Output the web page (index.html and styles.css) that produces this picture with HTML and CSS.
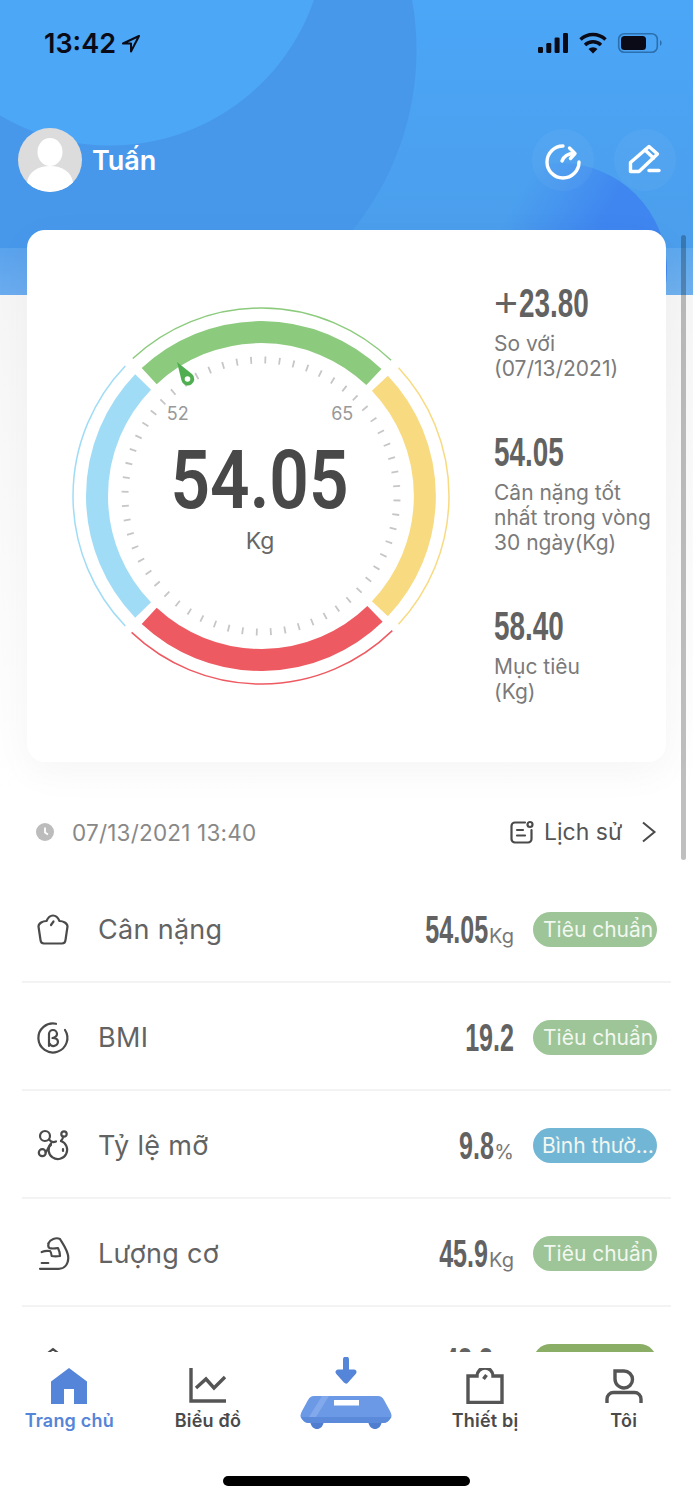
FILE: index.html
```html
<!DOCTYPE html>
<html lang="vi">
<head>
  <meta charset="UTF-8">
  <meta name="viewport" content="width=device-width, initial-scale=1.0">
  <title>Trang chủ</title>
  <link rel="stylesheet" href="styles.css">
</head>
<body>
  <div class="app">
    <div class="main">
      <div class="hero">
        <div class="status">
          <span class="time">13:42</span>
          <svg class="loc" width="20" height="20" viewBox="0 0 20 20"><path d="M18 2 L2 9.500 H10 V17.500 Z" fill="none" stroke="#0b0b18" stroke-width="2" stroke-linejoin="round"/></svg>
          <svg class="sys" width="125" height="24" viewBox="0 0 125 24">
            <g fill="#0b0b18">
              <rect x="0" y="15" width="5" height="6" rx="1.2"/>
              <rect x="8.3" y="11" width="5" height="10" rx="1.2"/>
              <rect x="16.6" y="5.5" width="5" height="15.5" rx="1.2"/>
              <rect x="25" y="1" width="5" height="20" rx="1.2"/>
            </g>
            <g fill="none" stroke="#0b0b18" stroke-width="3.4">
              <path d="M42.5 7.5 A18 18 0 0 1 67.5 7.5"/>
              <path d="M47 13 A11.5 11.5 0 0 1 63 13"/>
            </g>
            <path d="M55 21.5 L50.5 17 A6.5 6.5 0 0 1 59.5 17 Z" fill="#0b0b18"/>
            <rect x="80.7" y="1.7" width="38.6" height="18.6" rx="5.5" fill="none" stroke="#2a6fae" stroke-width="1.6"/>
            <rect x="83" y="4" width="25" height="14" rx="3.5" fill="#0b0b18"/>
            <path d="M122 8 a3.5 3.5 0 0 1 0 6 Z" fill="#2a6fae"/>
          </svg>
        </div>
        <div class="profile">
          <div class="avatar">
            <svg width="64" height="64" viewBox="0 0 64 64"><ellipse cx="32" cy="24" rx="12.500" ry="14" fill="#fff"/><path d="M9 55 C10 44 20 38 32 38 C44 38 54 44 55 55 C49 61 41 64 32 64 C23 64 15 61 9 55 Z" fill="#fff"/></svg>
          </div>
          <span class="name">Tuấn</span>
          <div class="round-btn">
            <svg width="62" height="62" viewBox="0 0 62 62" fill="none" stroke="#fff" stroke-width="3.400" stroke-linecap="round" stroke-linejoin="round"><path d="M31 17 A16 16 0 1 0 47 33"/><path d="M30 32 C32 27 36 24.500 42 24.500"/><path d="M37.500 19 L43 24.500 L38.500 29.500"/></svg>
          </div>
          <div class="round-btn">
            <svg width="62" height="62" viewBox="0 0 62 62" fill="none" stroke="#fff" stroke-width="3.400" stroke-linejoin="round" stroke-linecap="round"><path d="M16.500 42.500 L16.500 33.500 L35 17.500 L43.500 25 L25 42.500 Z"/><path d="M31 21 L39.500 29"/><path d="M35 41.500 H45"/></svg>
          </div>
        </div>
      </div>

      <div class="sheet">
        <div class="card">
          <svg class="gauge" width="400" height="400" viewBox="0 0 400 400" fill="none">
            <circle class="ticks" cx="200" cy="200" r="136"/>
            <g stroke-width="22">
              <path d="M88.200 80.100 A164 164 0 0 1 312.900 81.100" stroke="#8ccb7d"/>
              <path d="M318.900 87.200 A164 164 0 0 1 318.900 312.800" stroke="#f8da80"/>
              <path d="M314 317.900 A164 164 0 0 1 88.200 319.900" stroke="#ee5a61"/>
              <path d="M82.100 314 A164 164 0 0 1 82.100 86" stroke="#a0dcf6"/>
            </g>
            <g stroke-width="1.500">
              <path d="M71.800 62.500 A188 188 0 0 1 330.100 64.300" stroke="#8ccb7d"/>
              <path d="M337.500 71.800 A188 188 0 0 1 337.500 328.200" stroke="#f8da80"/>
              <path d="M331.300 334.600 A188 188 0 0 1 70.600 336.400" stroke="#ee5a61"/>
              <path d="M64.300 330.100 A188 188 0 0 1 64.300 69.900" stroke="#a0dcf6"/>
            </g>
            <path d="M116 66 L131 78 A6.500 6.500 0 1 1 120.500 84.500 Z" fill="#4fae4f"/>
            <circle cx="126.500" cy="83" r="2.800" fill="#fff"/>
            <text class="mark" x="116.800" y="124" text-anchor="middle">52</text>
            <text class="mark" x="281.200" y="124" text-anchor="middle">65</text>
            <text class="big" x="198.500" y="211.500" text-anchor="middle" textLength="178" lengthAdjust="spacingAndGlyphs">54.05</text>
            <text class="unit" x="199" y="252.500" text-anchor="middle">Kg</text>
          </svg>
          <div class="stats">
            <div class="stat">
              <div class="stat-val"><span class="plus">+</span><span class="squeeze">23.80</span></div>
              <div class="stat-txt">So với<br>(07/13/2021)</div>
            </div>
            <div class="stat">
              <div class="stat-val"><span class="squeeze">54.05</span></div>
              <div class="stat-txt">Cân nặng tốt<br>nhất trong vòng<br>30 ngày(Kg)</div>
            </div>
            <div class="stat">
              <div class="stat-val"><span class="squeeze">58.40</span></div>
              <div class="stat-txt">Mục tiêu<br>(Kg)</div>
            </div>
          </div>
        </div>

        <div class="date-row">
          <svg width="18" height="18" viewBox="0 0 18 18"><circle cx="9" cy="9" r="9" fill="#bcbcbc"/><path d="M9 4.500 V9.500 L12 11.500" fill="none" stroke="#fff" stroke-width="1.800"/></svg>
          <span class="date">07/13/2021 13:40</span>
          <svg class="hist-icon" width="24" height="24" viewBox="0 0 24 24" fill="none" stroke="#4a4a4a" stroke-width="2.200" stroke-linecap="round"><path d="M15 2.500 H5 a3.500 3.500 0 0 0 -3.500 3.500 V19 a3.500 3.500 0 0 0 3.500 3.500 H18 a3.500 3.500 0 0 0 3.500 -3.500 V10"/><path d="M7 10 H13"/><path d="M7 15.500 H15"/><circle cx="20" cy="4.500" r="2.500"/></svg>
          <span class="hist">Lịch sử</span>
          <svg class="chev" width="16" height="22" viewBox="0 0 16 22"><path d="M2 1.500 L13.500 11 L2 20.500" fill="none" stroke="#4a4a4a" stroke-width="2"/></svg>
        </div>

        <div class="row">
          <svg class="row-icon" width="32" height="32" viewBox="0 0 32 32" fill="none"><path d="M9.500 7 C11 3.500 13.500 1.500 16 1.500 C19 1.500 21 3.500 22.500 7 C26 7 30.500 9 30.500 12.500 L28.500 26 C28.300 28.500 27 29.500 25 29.500 H7 C5 29.500 3.700 28.500 3.500 26 L1.500 12.500 C1.500 9 6 7 9.500 7 Z"/><path d="M14 11 L16.500 7.500"/></svg>
          <span class="label">Cân nặng</span>
          <span class="value"><span class="num">54.05</span><span class="suffix">Kg</span></span>
          <span class="pill">Tiêu chuẩn</span>
        </div>
        <div class="row">
          <svg class="row-icon" width="32" height="32" viewBox="0 0 32 32" fill="none"><path d="M19 1.800 A14.500 14.500 0 1 0 28 8"/><path d="M12 24 V12 A4 4 0 0 1 20 12 C20 14.500 18 15.500 15.500 16 C19 16 21 17.500 21 20 A4.500 4.500 0 0 1 12.500 21.500"/></svg>
          <span class="label">BMI</span>
          <span class="value"><span class="num">19.2</span></span>
          <span class="pill">Tiêu chuẩn</span>
        </div>
        <div class="row">
          <svg class="row-icon" width="32" height="32" viewBox="0 0 32 32" fill="none"><path d="M14 13.500 A9.300 9.300 0 1 0 24 11"/><circle cx="8" cy="6" r="5"/><circle cx="5.300" cy="22.700" r="3.500"/><circle cx="27" cy="4" r="2.700"/><path d="M12 9.500 C14 12 16 13 19 11.500"/><path d="M26 6.700 C26 8.500 25 10 24 11"/><path d="M8.500 22 C11 21 10 17 14 15"/><path d="M26 19 V21"/></svg>
          <span class="label">Tỷ lệ mỡ</span>
          <span class="value"><span class="num">9.8</span><span class="suffix">%</span></span>
          <span class="pill pill-blue">Bình thường</span>
        </div>
        <div class="row">
          <svg class="row-icon" width="32" height="32" viewBox="0 0 32 32" fill="none"><path d="M11.300 5.500 C13 1.500 19 -1 23 1 C26 6 31.500 13 31.300 20 C31 27 27 31 21.300 30.800 H3"/><path d="M11.500 6 C11 8 11.500 9.500 12.500 10 C15 11 18 10.500 21 10 C22 12 23 15 23 18 C20 18.500 17 18.500 14.700 18 C14.500 16 14 14 13 13 C10 12.500 7 13 4.700 14"/><path d="M4.700 25 H11.300"/></svg>
          <span class="label">Lượng cơ</span>
          <span class="value"><span class="num">45.9</span><span class="suffix">Kg</span></span>
          <span class="pill">Tiêu chuẩn</span>
        </div>
        <div class="row">
          <svg class="row-icon" width="32" height="32" viewBox="0 0 32 32" fill="none"><path d="M11 7 L16 3 L21 7"/></svg>
          <span class="value"><span class="num">48.3</span><span class="suffix">%</span></span>
          <span class="pill pill-olive"></span>
        </div>
      </div>
    </div>

    <div class="tabbar">
      <div class="tab tab-active">
        <svg width="38" height="36" viewBox="0 0 38 36"><path d="M19 0 L37 13.500 V36 H24 V21 H14 V36 H1 V13.500 Z" fill="#5585d8"/></svg>
        <span>Trang chủ</span>
      </div>
      <div class="tab">
        <svg width="38" height="36" viewBox="0 0 38 36" fill="none" stroke="#555" stroke-width="3.400"><path d="M2 0 V33 H37"/><path d="M7 20 L17 11 L25 20 L36 9"/></svg>
        <span>Biểu đồ</span>
      </div>
      <div class="tab tab-scale">
        <svg width="92" height="74" viewBox="0 0 92 74">
          <path d="M46 2.500 V18" stroke="#5585d8" stroke-width="6" stroke-linecap="round"/>
          <path d="M38 15 H54 L46 24 Z" fill="#5585d8" stroke="#5585d8" stroke-width="5" stroke-linejoin="round"/>
          <path d="M10 64 H24 C23 70 20 72 17 72 S11 70 10 64 Z" fill="#4f7dcf"/>
          <path d="M68 64 H82 C81 70 78 72 75 72 S69 70 68 64 Z" fill="#4f7dcf"/>
          <path d="M14 39 H78 C81 39 82 40 84 43 L90 54 C92 58 92 60 90 62 C88 65 86 66 83 66 H9 C6 66 4 65 2 62 C0 60 0 58 2 54 L8 43 C10 40 11 39 14 39 Z" fill="#6b99e6"/>
          <path d="M0.800 60 C3 64 6 66 9 66 H83 C86 66 89 64 91.200 60 Z" fill="#5a8ad9"/>
          <path d="M22 39 H29 L16 60 H9 Z" fill="#82a9ec"/>
          <rect x="34" y="43" width="25" height="5.500" fill="#fff"/>
        </svg>
      </div>
      <div class="tab">
        <svg width="38" height="36" viewBox="0 0 38 36" fill="none" stroke="#555" stroke-width="3.400"><path d="M2 34.500 V8 H11 A8 8 0 0 1 27 8 H36 V34.500 Z"/><path d="M17.500 11 L20.500 7"/></svg>
        <span>Thiết bị</span>
      </div>
      <div class="tab">
        <svg width="38" height="36" viewBox="0 0 38 36" fill="none" stroke="#555" stroke-width="3.400"><path d="M10 3 H19 A8.500 8.500 0 0 1 19 20 A9 9 0 0 1 10 11 Z"/><path d="M2 35 V31 A6.500 6.500 0 0 1 8.500 24.500 H29.500 A6.500 6.500 0 0 1 36 31 V35"/></svg>
        <span>Tôi</span>
      </div>
    </div>
    <div class="home-bar"></div>

    <div class="scrollbar"></div>
  </div>
</body>
</html>
```

FILE: styles.css
```css
* {
  box-sizing: border-box;
}

body {
  margin: 0;
  background: #fff;
  font-family: Inter, "Noto Sans", sans-serif;
}

.app {
  position: relative;
  width: 693px;
  height: 1500px;
  overflow: hidden;
  display: flex;
  flex-direction: column;
  background: #fff;
}

.main {
  height: 1352px;
  overflow: hidden;
}

/* header */
.hero {
  position: relative;
  height: 295px;
  overflow: hidden;
  background:
    linear-gradient(transparent 248px, rgba(255, 255, 255, .1) 248px, rgba(255, 255, 255, .2) 295px),
    radial-gradient(circle at 110px -70px, #4ca7f7 215px, transparent 216px),
    radial-gradient(circle at 130px 50px, #4798eb 286px, transparent 287px),
    linear-gradient(#4ba6f7, #4b9dea);
}

/* darker bubble behind the buttons */
.hero::before {
  content: "";
  position: absolute;
  left: 453px;
  top: 163px;
  width: 214px;
  height: 214px;
  border-radius: 50%;
  background: linear-gradient(120deg, rgba(63, 134, 240, 0) 25%, #3f86f0 55%);
}

.status {
  position: relative;
  display: flex;
  align-items: center;
  height: 66px;
  margin-bottom: 62px;
  padding: 22px 0 0 44px;
  color: #0b0b18;
}

.time {
  font-size: 27px;
  font-weight: 600;
  line-height: 44px;
}

.loc {
  margin: 0 0 0 5px;
}

.sys {
  margin-left: auto;
  margin-right: 30px;
}

.profile {
  position: relative;
  display: flex;
  align-items: center;
  padding: 0 17px 0 18px;
}

.avatar {
  width: 64px;
  height: 64px;
  border-radius: 50%;
  overflow: hidden;
  background: #dcdcdc;
}

.avatar svg {
  display: block;
}

.name {
  flex: 1;
  margin-left: 10px;
  color: #fff;
  font-size: 27px;
  font-weight: 600;
}

.round-btn {
  width: 62px;
  height: 62px;
  margin-left: 20px;
  border-radius: 50%;
  background: rgba(255, 255, 255, .04);
}

.round-btn svg {
  display: block;
}

/* main sheet */
.sheet {
  display: flow-root;
  background: linear-gradient(#f6f6f6, #fff 505px);
}

.card {
  position: relative;
  display: flex;
  width: 639px;
  height: 532px;
  margin: -65px 0 0 27px;
  padding: 65.5px 0 0 33.5px;
  background: #fff;
  border-radius: 18px;
  box-shadow: 0 10px 40px rgba(0, 0, 0, .04);
}

.gauge {
  flex: none;
}

.ticks {
  stroke: #c6c6c6;
  stroke-width: 7;
  stroke-dasharray: 1.8 12.44;
  transform: rotate(91.4deg);
  transform-origin: 200px 200px;
}

.mark {
  fill: #999;
  font-size: 18px;
}

.big {
  fill: #484848;
  font-family: Roboto, sans-serif;
  font-size: 81px;
  font-weight: 600;
}

.unit {
  fill: #666;
  font-size: 23px;
}

.stats {
  display: flex;
  flex-direction: column;
  gap: 51px;
  margin: -12.5px 0 0 33.5px;
}

.stat-val {
  display: flex;
  height: 40px;
  line-height: 40px;
  color: #626262;
  font-family: "Liberation Sans", sans-serif;
  font-size: 41px;
  font-weight: 700;
  white-space: nowrap;
}

.plus {
  margin-right: 1px;
  font-weight: 400;
}

.squeeze {
  display: inline-block;
  transform: scaleX(.68);
  transform-origin: left center;
}

.stat-txt {
  margin-top: 8px;
  color: #7a7a7a;
  font-size: 21px;
  line-height: 25px;
  white-space: nowrap;
}

.date-row {
  display: flex;
  align-items: center;
  height: 40px;
  margin-top: 50px;
  padding-left: 36px;
}

.date {
  flex: 1;
  margin-left: 18px;
  color: #888;
  font-size: 22.5px;
  letter-spacing: .2px;
}

.hist-icon {
  margin-right: 10px;
}

.hist {
  width: 97px;
  color: #555;
  font-size: 23px;
}

.chev {
  margin-right: 36px;
}

/* rows */
.row {
  display: flex;
  align-items: center;
  height: 108px;
  margin: 0 22px;
  padding: 3px 14px 0 15px;
  border-bottom: 2px solid #f3f3f3;
}

.date-row + .row {
  margin-top: 23px;
}

.row-icon {
  flex: none;
  stroke: #4a4a4a;
  stroke-width: 2.2;
  stroke-linecap: round;
  stroke-linejoin: round;
  overflow: visible;
}

.label {
  margin-left: 29px;
  color: #636363;
  font-size: 27px;
  letter-spacing: .3px;
}

.value {
  flex: 1;
  text-align: right;
  white-space: nowrap;
  color: #626262;
}

.num {
  display: inline-block;
  font-family: "Liberation Sans", sans-serif;
  font-size: 38px;
  font-weight: 700;
  line-height: 40px;
  transform: scaleX(.66);
  transform-origin: right center;
}

.suffix {
  margin-left: 1px;
  color: #777;
  font-size: 20px;
}

.pill {
  flex: none;
  width: 124px;
  height: 35px;
  margin-left: 19px;
  padding: 0 3px 0 10px;
  overflow: hidden;
  border-radius: 18px;
  background: #9dc598;
  color: #f2f7f0;
  font-size: 21px;
  line-height: 35px;
  white-space: nowrap;
  text-overflow: ellipsis;
}

.pill-blue {
  padding-left: 9px;
  background: #72b6d6;
}

.pill-olive {
  background: #8bae66;
}

/* tab bar */
.tabbar {
  display: flex;
  height: 148px;
  padding-top: 16px;
  background: #fff;
}

.tab {
  display: flex;
  flex: 1;
  flex-direction: column;
  align-items: center;
  color: #4a4a4a;
  font-size: 18px;
  font-weight: 600;
  letter-spacing: .2px;
}

.tab span {
  margin-top: 5px;
  line-height: 24px;
}

.tab-active {
  color: #5585d8;
}

.tab-scale {
  margin-top: -11px;
}

.home-bar {
  position: absolute;
  left: 223px;
  bottom: 14px;
  width: 247px;
  height: 10px;
  border-radius: 5px;
  background: #000;
}

.scrollbar {
  position: absolute;
  left: 681px;
  top: 235px;
  width: 5px;
  height: 625px;
  border-radius: 3px;
  background: rgba(0, 0, 0, .25);
}
```
